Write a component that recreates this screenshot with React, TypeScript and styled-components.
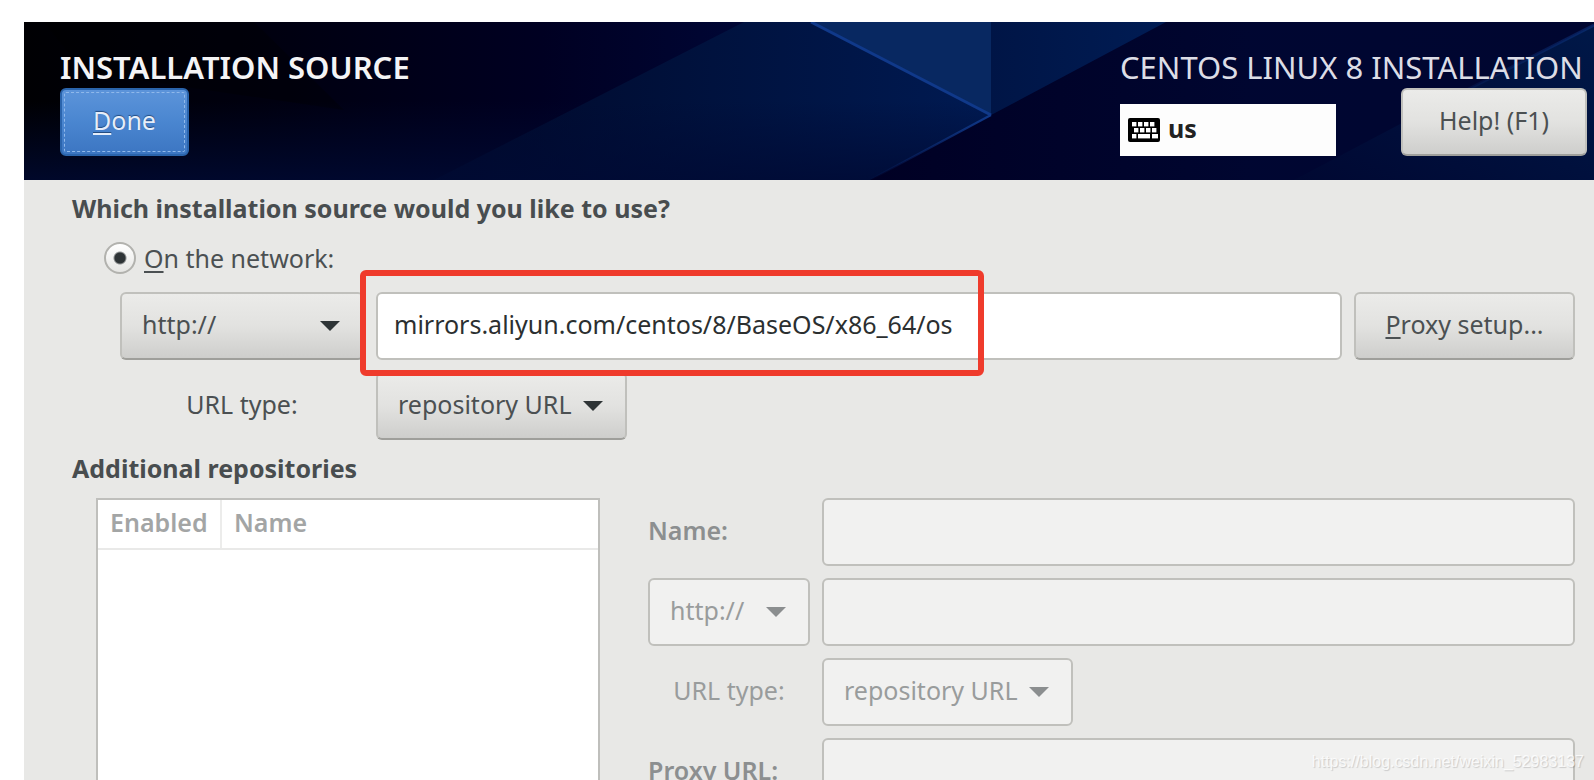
import React from "react";
import styled, { createGlobalStyle, css } from "styled-components";

const GlobalStyle = createGlobalStyle`
  *, *::before, *::after { box-sizing: border-box; }
  body {
    margin: 0;
    background: #fff;
    font-family: "Noto Sans", sans-serif;
    font-size: 25px;
    line-height: 36px;
    color: #4b5052;
  }
`;

const Page = styled.div`
  position: relative;
  height: 100vh;
  overflow: hidden;
  padding: 22px 0 0 24px;
`;

const Window = styled.main`
  min-height: 100%;
  background: #e8e8e6;
`;

/* ---------- header ---------- */

const Header = styled.header`
  position: relative;
  display: flex;
  justify-content: space-between;
  padding: 24px 7px 24px 36px;
  background: #00021e;
`;

const Backdrop = styled.svg`
  position: absolute;
  inset: 0;
  width: 100%;
  height: 100%;
`;

const HeaderGroup = styled.div<{ $width?: number }>`
  position: relative;
  display: flex;
  flex-direction: column;
  ${(p) => p.$width && `width: ${p.$width}px;`}
`;

const Title = styled.h1<{ $strong?: boolean }>`
  margin: 0;
  font-size: 31px;
  line-height: 42px;
  font-weight: ${(p) => (p.$strong ? 600 : 400)};
  color: ${(p) => (p.$strong ? "#f4f4f6" : "#dcdde6")};
  white-space: nowrap;
`;

const HeaderActions = styled.div`
  display: flex;
  justify-content: space-between;
  align-items: flex-end;
`;

const KeyboardLayout = styled.div`
  display: flex;
  align-items: center;
  gap: 8px;
  width: 216px;
  height: 52px;
  padding: 0 8px;
  background: #fdfdfd;
  color: #222;
  font-weight: 700;
`;

const LayoutName = styled.span`
  padding-bottom: 4px;
`;

/* ---------- controls ---------- */

const controlBox = css`
  height: 68px;
  border: 2px solid #c0c0bc;
  border-radius: 6px;
  font: inherit;
  color: inherit;
`;

const raised = css`
  background: linear-gradient(#ebebe9, #e2e2e0 50%, #cececc);
  border-bottom-color: #9f9f9b;
`;

const Button = styled.button<{ $primary?: boolean; $width: number }>`
  ${controlBox}
  ${raised}
  width: ${(p) => p.$width}px;
  padding: 0 0 4px;
  white-space: nowrap;
  flex: none;
  ${(p) =>
    p.$primary &&
    css`
      border-color: #2a64ac;
      background: linear-gradient(#5c94da, #4a86d0 50%, #3c76c2);
      color: #e6eefa;
      text-shadow: 0 -1px 1px #244c80;
      outline: 1px dashed #8fb8ea;
      outline-offset: -5px;
    `}
`;

const Mnemonic = styled.span`
  text-decoration: underline;
  text-decoration-thickness: 2px;
  text-underline-offset: 3px;
`;

const Field = styled.input`
  ${controlBox}
  display: block;
  width: 100%;
  min-width: 0;
  padding: 0 16px 4px;
  background: #fff;
  color: #2b2f30;
  &:disabled {
    background: #f1f1f0;
  }
`;

const SelectFrame = styled.div<{ $width?: number }>`
  display: grid;
  align-items: center;
  width: ${(p) => (p.$width ? `${p.$width}px` : "100%")};
  > * {
    grid-area: 1 / 1;
  }
`;

const NativeSelect = styled.select`
  ${controlBox}
  ${raised}
  appearance: none;
  width: 100%;
  padding: 0 44px 4px 20px;
  &:disabled {
    background: #f1f1f0;
    border-color: #c0c0bc;
    color: #999c9c;
    opacity: 1;
  }
`;

const Arrow = styled.svg<{ $muted?: boolean }>`
  justify-self: end;
  margin-right: 24px;
  width: 20px;
  height: 10px;
  pointer-events: none;
  fill: ${(p) => (p.$muted ? "#8b8e8f" : "#2e3436")};
`;

/* ---------- body ---------- */

const Body = styled.div`
  padding: 10px 19px 32px 48px;
`;

const Heading = styled.h2`
  margin: 0;
  font-size: 25px;
  line-height: 36px;
  font-weight: 700;
  color: #484d4f;
`;

const RadioRow = styled.label`
  display: flex;
  align-items: center;
  gap: 8px;
  width: max-content;
  margin: 14px 0 16px 32px;
`;

const Radio = styled.input`
  appearance: none;
  width: 32px;
  height: 32px;
  margin: 0;
  border: 2px solid #b2b2ae;
  border-radius: 50%;
  background: linear-gradient(#fff, #e6e6e4);
  &:checked {
    background: radial-gradient(circle, #2e3436 5px, transparent 7px),
      linear-gradient(#fff, #e6e6e4);
  }
`;

const SourceGrid = styled.div`
  display: grid;
  grid-template-columns: 244px minmax(0, 1fr) 221px;
  gap: 12px;
  margin: 0 0 10px 48px;
`;

const AddressCell = styled.div`
  position: relative;
`;

const Highlight = styled.div`
  position: absolute;
  left: -16px;
  top: -22px;
  width: 624px;
  height: 106px;
  border: 6px solid #ef3b2c;
  border-radius: 6px;
  pointer-events: none;
  z-index: 1;
`;

const CellLabel = styled.label<{ $center?: boolean; $strong?: boolean; $muted?: boolean }>`
  align-self: center;
  padding-bottom: 4px;
  white-space: nowrap;
  text-align: ${(p) => (p.$center ? "center" : "left")};
  font-weight: ${(p) => (p.$strong ? 600 : 400)};
  color: ${(p) => (p.$muted ? (p.$strong ? "#8c8f90" : "#999c9c") : "inherit")};
`;

const Repositories = styled.div`
  display: grid;
  grid-template-columns: 504px minmax(0, 1fr);
  gap: 48px;
  margin: 12px 0 0 24px;
`;

const RepoPanel = styled.div`
  border: 2px solid #bfbfbc;
  background: #fff;
`;

const RepoTable = styled.table`
  width: 100%;
  border-collapse: collapse;
  th {
    padding: 4px 12px 8px;
    border-bottom: 2px solid #e9e9e8;
    text-align: left;
    font-weight: 600;
    color: #a3a5a5;
  }
  th:first-child {
    width: 123px;
    border-right: 2px solid #ececeb;
  }
`;

const RepoForm = styled.form`
  display: grid;
  grid-template-columns: 162px minmax(0, 1fr);
  gap: 12px;
`;

const Watermark = styled.div`
  position: absolute;
  right: 10px;
  bottom: 8px;
  font: 16px/20px "Liberation Sans", sans-serif;
  color: rgba(255, 255, 255, 0.8);
  text-shadow: 1px 1px 1px rgba(0, 0, 0, 0.16);
  pointer-events: none;
`;

type SelectProps = {
  id: string;
  label?: string;
  value: string;
  width?: number;
  disabled?: boolean;
};

function Select({ id, label, value, width, disabled }: SelectProps) {
  return (
    <SelectFrame $width={width}>
      <NativeSelect id={id} aria-label={label} disabled={disabled}>
        <option>{value}</option>
      </NativeSelect>
      <Arrow $muted={disabled} viewBox="0 0 20 10" aria-hidden="true">
        <path d="M0 0h20L10 10z" />
      </Arrow>
    </SelectFrame>
  );
}

function KeyboardIcon() {
  const keys = [
    [4, 4], [10, 4], [16, 4], [22, 4],
    [6, 10], [12, 10], [18, 10], [24, 10],
    [4, 16],
  ];
  return (
    <svg width="32" height="24" viewBox="0 0 32 24" aria-hidden="true">
      <rect width="32" height="24" rx="2" fill="#000" />
      {keys.map(([x, y]) => (
        <rect key={`${x}-${y}`} x={x} y={y} width="4.4" height="4.4" fill="#fff" />
      ))}
      <rect x="10" y="16" width="12" height="4.4" fill="#fff" />
      <rect x="24" y="16" width="6" height="4.4" fill="#fff" />
    </svg>
  );
}

function HeaderBackdrop() {
  return (
    <Backdrop viewBox="0 0 1570 158" preserveAspectRatio="none" aria-hidden="true">
      <defs>
        <linearGradient id="night" x1="0" x2="1" y1="0" y2="0">
          <stop offset="0" stopColor="#000003" />
          <stop offset="0.15" stopColor="#00000f" />
          <stop offset="0.33" stopColor="#000022" />
          <stop offset="0.45" stopColor="#000634" />
          <stop offset="1" stopColor="#000630" />
        </linearGradient>
        <linearGradient id="floor" x1="0" x2="0" y1="0" y2="1">
          <stop offset="0.5" stopColor="#000a34" stopOpacity="0" />
          <stop offset="1" stopColor="#000a34" stopOpacity="0.8" />
        </linearGradient>
        <linearGradient id="facet" x1="0" x2="1" y1="0" y2="0">
          <stop offset="0" stopColor="#000828" />
          <stop offset="0.5" stopColor="#00123e" />
          <stop offset="1" stopColor="#001a52" />
        </linearGradient>
        <linearGradient id="wing" x1="0" x2="1" y1="0" y2="0">
          <stop offset="0" stopColor="#001546" />
          <stop offset="1" stopColor="#001c54" />
        </linearGradient>
        <linearGradient id="shade" x1="0" x2="1" y1="0" y2="0">
          <stop offset="0" stopColor="#000024" />
          <stop offset="1" stopColor="#000630" />
        </linearGradient>
        <linearGradient id="edge" x1="1" x2="0" y1="0" y2="1">
          <stop offset="0" stopColor="#10398a" />
          <stop offset="1" stopColor="#10398a" stopOpacity="0" />
        </linearGradient>
        <linearGradient id="beam" x1="1" x2="0" y1="0" y2="1">
          <stop offset="0" stopColor="#001848" />
          <stop offset="1" stopColor="#000832" />
        </linearGradient>
      </defs>
      <rect width="1570" height="158" fill="url(#night)" />
      <path d="M20 0L60 50 320 88 230 0z" fill="#000" opacity="0.3" />
      <path d="M720 0h247v93L846 158H410L520 102z" fill="url(#facet)" />
      <rect width="967" height="158" fill="url(#floor)" />
      <path d="M967 93L846 158h380V0h-84z" fill="url(#shade)" />
      <path d="M787 0h180v93z" fill="#082861" />
      <path d="M967 0h175L967 93z" fill="url(#wing)" />
      <path d="M1570 3L1380 100 1270 158h300z" fill="url(#beam)" />
      <path d="M787 0L967 93" stroke="#10398a" strokeWidth="3" fill="none" />
      <path d="M967 93L846 158" stroke="url(#edge)" strokeWidth="2" fill="none" />
      <path d="M1570 3L1380 100" stroke="url(#edge)" strokeWidth="3" opacity="0.5" fill="none" />
    </Backdrop>
  );
}

export default function App() {
  return (
    <>
      <GlobalStyle />
      <Page>
        <Window>
          <Header>
            <HeaderBackdrop />
            <HeaderGroup>
              <Title $strong>INSTALLATION SOURCE</Title>
              <Button type="button" $primary $width={129}>
                <Mnemonic>D</Mnemonic>one
              </Button>
            </HeaderGroup>
            <HeaderGroup $width={467}>
              <Title as="div">CENTOS LINUX 8 INSTALLATION</Title>
              <HeaderActions>
                <KeyboardLayout>
                  <KeyboardIcon />
                  <LayoutName>us</LayoutName>
                </KeyboardLayout>
                <Button type="button" $width={186}>Help! (F1)</Button>
              </HeaderActions>
            </HeaderGroup>
          </Header>

          <Body>
            <Heading>Which installation source would you like to use?</Heading>
            <RadioRow>
              <Radio type="radio" name="source" defaultChecked />
              <span>
                <Mnemonic>O</Mnemonic>n the network:
              </span>
            </RadioRow>
            <SourceGrid>
              <Select id="protocol" label="Protocol" value="http://" />
              <AddressCell>
                <Field
                  type="text"
                  aria-label="Installation source address"
                  defaultValue="mirrors.aliyun.com/centos/8/BaseOS/x86_64/os"
                />
                <Highlight />
              </AddressCell>
              <Button type="button" $width={221}>
                <Mnemonic>P</Mnemonic>roxy setup...
              </Button>
              <CellLabel htmlFor="url-type" $center>URL type:</CellLabel>
              <Select id="url-type" value="repository URL" width={251} />
            </SourceGrid>

            <Heading>Additional repositories</Heading>
            <Repositories>
              <RepoPanel>
                <RepoTable>
                  <thead>
                    <tr>
                      <th scope="col">Enabled</th>
                      <th scope="col">Name</th>
                    </tr>
                  </thead>
                </RepoTable>
              </RepoPanel>
              <RepoForm>
                <CellLabel htmlFor="repo-name" $strong $muted>Name:</CellLabel>
                <Field id="repo-name" type="text" disabled />
                <Select id="repo-protocol" label="Repository protocol" value="http://" disabled />
                <Field type="text" aria-label="Repository address" disabled />
                <CellLabel htmlFor="repo-url-type" $center $muted>URL type:</CellLabel>
                <Select id="repo-url-type" value="repository URL" width={251} disabled />
                <CellLabel htmlFor="repo-proxy" $strong $muted>Proxy URL:</CellLabel>
                <Field id="repo-proxy" type="text" disabled />
              </RepoForm>
            </Repositories>
          </Body>
        </Window>
        <Watermark>https://blog.csdn.net/weixin_52983137</Watermark>
      </Page>
    </>
  );
}
